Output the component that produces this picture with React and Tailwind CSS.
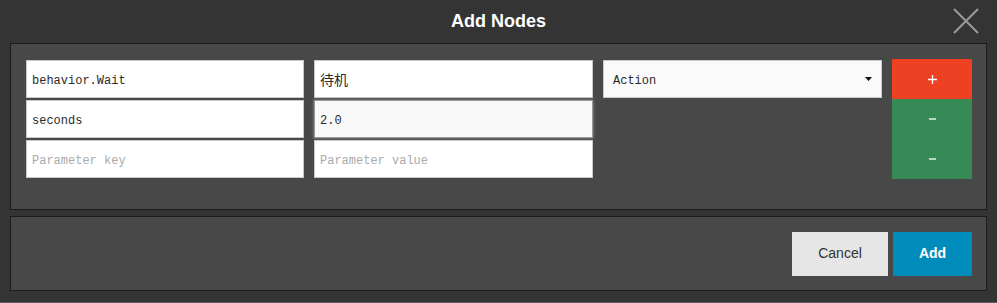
import React from "react";

const mono = { fontFamily: '"Liberation Mono", "DejaVu Sans Mono", monospace' };

function Field({ value, placeholder, focused, cjk }) {
  return (
    <div
      className={
        "h-[38px] flex items-center px-[5px] border text-[12px] " +
        (cjk ? "pt-[1px] " : "pt-[4px] ") +
        (focused
          ? "bg-[#f8f8f8] border-[#999] shadow-[0_0_3px_#999]"
          : "bg-white border-[#c8c8c8]")
      }
      style={
        cjk
          ? { fontFamily: '"Noto Sans CJK SC", "Noto Sans", sans-serif', fontSize: "14px" }
          : mono
      }
    >
      {value ? (
        <span className="text-[#2a2a2a]">{value}</span>
      ) : (
        <span className="text-[#aaa]">{placeholder}</span>
      )}
    </div>
  );
}

export default function App() {
  return (
    <div
      className="w-[997px] h-[303px] bg-[#343434] flex flex-col"
      style={{ fontFamily: '"Liberation Sans", Arial, sans-serif' }}
    >
      <div className="h-[43px] relative flex items-center justify-center">
        <span className="text-white text-[18px] font-bold">Add Nodes</span>
        <svg
          className="absolute left-[953px] top-[8px]"
          width="26"
          height="26"
          viewBox="0 0 26 26"
        >
          <path d="M1 1 L25 25 M25 1 L1 25" stroke="#9a9a9a" strokeWidth="2" fill="none" />
        </svg>
      </div>

      <div className="mx-[10px] h-[167px] bg-[#484848] border border-[#1c1c1c] pl-[15px] pt-[15px]">
        <div className="grid grid-cols-[278px_279px_279px_80px] gap-x-[10px]">
          <div className="flex flex-col gap-[2px] pt-[1px]">
            <Field value="behavior.Wait" />
            <Field value="seconds" />
            <Field placeholder="Parameter key" />
          </div>
          <div className="flex flex-col gap-[2px] pt-[1px]">
            <Field value="待机" cjk />
            <Field value="2.0" focused />
            <Field placeholder="Parameter value" />
          </div>
          <div className="pt-[1px]">
            <div
              className="h-[38px] flex items-center justify-between pl-[9px] pr-[9px] pt-[4px] bg-[#fafafa] border border-[#c8c8c8] text-[12px] text-[#2a2a2a]"
              style={mono}
            >
              <span>Action</span>
              <svg width="7" height="4" viewBox="0 0 7 4" className="-mt-[4px]">
                <path d="M0 0 H7 L3.5 4 Z" fill="#111" />
              </svg>
            </div>
          </div>
          <div className="flex flex-col text-white">
            <div className="h-[40px] bg-[#ee4123] flex items-center justify-center">
              <svg width="9" height="9" viewBox="0 0 9 9">
                <path d="M4.5 0 V9 M0 4.5 H9" stroke="#fff" strokeWidth="1.3" />
              </svg>
            </div>
            <div className="h-[40px] bg-[#368a55] flex items-center justify-center">
              <svg width="7" height="2" viewBox="0 0 7 2">
                <path d="M0 1 H7" stroke="#fff" strokeWidth="1.3" />
              </svg>
            </div>
            <div className="h-[40px] bg-[#368a55] flex items-center justify-center">
              <svg width="7" height="2" viewBox="0 0 7 2">
                <path d="M0 1 H7" stroke="#fff" strokeWidth="1.3" />
              </svg>
            </div>
          </div>
        </div>
      </div>

      <div className="mx-[10px] mt-[6px] h-[75px] bg-[#484848] border border-[#1c1c1c] flex items-center justify-end pr-[14px] gap-[5px]">
        <div className="w-[96px] h-[44px] bg-[#e6e6e6] text-[#333] text-[14px] flex items-center justify-center">
          Cancel
        </div>
        <div className="w-[79px] h-[44px] bg-[#008cba] text-white text-[14px] font-bold flex items-center justify-center">
          Add
        </div>
      </div>

      <div className="mt-auto h-px bg-[#5a5a5a]" />
    </div>
  );
}
